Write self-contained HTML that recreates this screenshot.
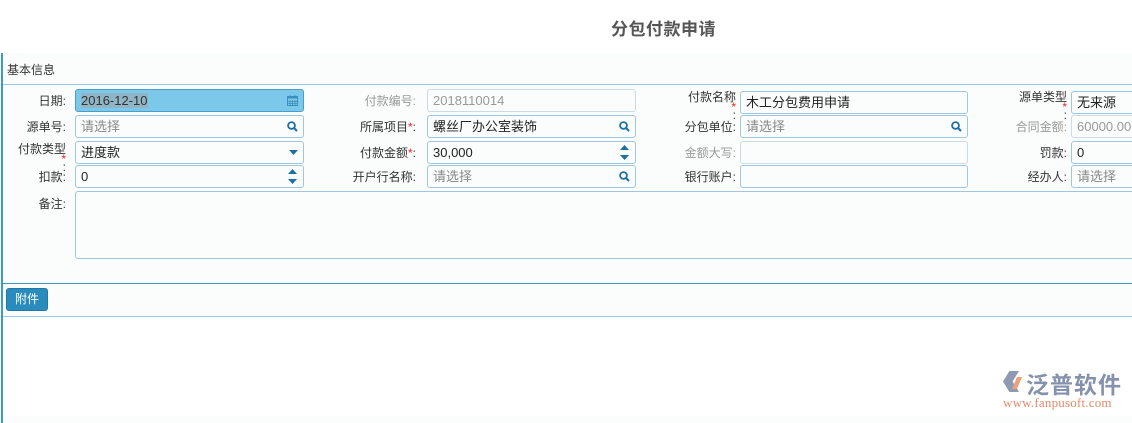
<!DOCTYPE html>
<html><head><meta charset="utf-8"><style>
*{margin:0;padding:0;box-sizing:border-box}
body{width:1132px;height:416px;overflow:hidden;background:#fff;font-family:"Liberation Sans","Noto Sans CJK SC",sans-serif;position:relative}
.t{position:absolute;left:611px;top:15px;font-size:17px;font-weight:bold;color:#555;letter-spacing:0.5px}
.panel{position:absolute;left:1px;top:53px;width:1140px;height:370px;background:#fbfcfc;border-left:2px solid #3a9bc8}
.a{position:absolute}
.lbl{position:absolute;font-size:12px;color:#333;text-align:right;white-space:nowrap}
.lbl.g{color:#999}
.in{position:absolute;height:23px;border:1px solid #9fc6de;border-radius:3px;background:#fbfcfc;font-size:13px;color:#222;padding-left:5px;line-height:21px;white-space:nowrap;overflow:hidden}
.in.d{border-color:#cfdbe2;color:#999}
.ph{color:#888}
.ic{position:absolute;right:4px;top:4px}
.req{color:#e22}
.two{line-height:12px}
.two .s{display:inline-block;line-height:8px;vertical-align:top}
</style></head><body>
<div class="t">分包付款申请</div>
<div class="panel"></div>
<div class="a" style="left:7px;top:61px;font-size:12px;color:#333">基本信息</div>
<div class="a" style="left:3px;top:84px;width:1129px;height:1px;background:#9cc7e0"></div>

<!-- row1 -->
<div class="lbl" style="left:20px;top:92px;width:46px">日期:</div>
<div class="in" style="left:75px;top:89px;width:229px;background:#7cc8eb;border-color:#4a9fc9"><span style="background:#8fb5c6;color:#333">2016-12-10</span>
<svg class="ic" style="top:5px;right:5px" width="11" height="11" viewBox="0 0 11 11"><rect x="0.5" y="1.5" width="10" height="9" fill="none" stroke="#3a8fbd"/><rect x="0.5" y="1.5" width="10" height="2" fill="#3a8fbd"/><path d="M3 0v3M8 0v3M3 5v5M5.5 5v5M8 5v5M1 6.5h9M1 8.5h9" stroke="#3a8fbd" stroke-width="0.8"/></svg></div>
<div class="lbl g" style="left:330px;top:92px;width:86px">付款编号:</div>
<div class="in d" style="left:427px;top:89px;width:209px">2018110014</div>
<div class="lbl two" style="left:660px;top:91px;width:76px">付款名称<br><span class="s"><span class="req">*</span><br>:</span></div>
<div class="in" style="left:740px;top:91px;width:228px">木工分包费用申请</div>
<div class="lbl two" style="left:990px;top:91px;width:77px">源单类型<br><span class="s"><span class="req">*</span><br>:</span></div>
<div class="in" style="left:1071px;top:91px;width:80px">无来源</div>

<!-- row2 -->
<div class="lbl" style="left:10px;top:118px;width:56px">源单号:</div>
<div class="in" style="left:75px;top:115px;width:229px"><span class="ph">请选择</span>
<svg class="ic" style="top:5px;right:5px" width="11" height="11" viewBox="0 0 11 11"><circle cx="4.5" cy="4.5" r="3.4" fill="none" stroke="#1d6fa5" stroke-width="1.8"/><path d="M7 7l3 3" stroke="#1d6fa5" stroke-width="2"/></svg></div>
<div class="lbl" style="left:330px;top:118px;width:86px">所属项目<span class="req">*</span>:</div>
<div class="in" style="left:427px;top:115px;width:209px">螺丝厂办公室装饰
<svg class="ic" style="top:5px;right:5px" width="11" height="11" viewBox="0 0 11 11"><circle cx="4.5" cy="4.5" r="3.4" fill="none" stroke="#1d6fa5" stroke-width="1.8"/><path d="M7 7l3 3" stroke="#1d6fa5" stroke-width="2"/></svg></div>
<div class="lbl" style="left:660px;top:118px;width:76px">分包单位:</div>
<div class="in" style="left:740px;top:115px;width:228px"><span class="ph">请选择</span>
<svg class="ic" style="top:5px;right:5px" width="11" height="11" viewBox="0 0 11 11"><circle cx="4.5" cy="4.5" r="3.4" fill="none" stroke="#1d6fa5" stroke-width="1.8"/><path d="M7 7l3 3" stroke="#1d6fa5" stroke-width="2"/></svg></div>
<div class="lbl g" style="left:990px;top:118px;width:77px">合同金额:</div>
<div class="in d" style="left:1071px;top:115px;width:80px">60000.00</div>

<!-- row3 -->
<div class="lbl two" style="left:10px;top:143px;width:56px">付款类型<br><span class="s"><span class="req">*</span><br>:</span></div>
<div class="in" style="left:75px;top:141px;width:229px">进度款
<svg class="ic" style="top:8px;right:5px" width="9" height="6" viewBox="0 0 9 6"><path d="M0 0h9L4.5 5z" fill="#1d6fa5"/></svg></div>
<div class="lbl" style="left:330px;top:144px;width:86px">付款金额<span class="req">*</span>:</div>
<div class="in" style="left:427px;top:141px;width:209px">30,000
<svg class="ic" style="top:3px;right:6px" width="9" height="15" viewBox="0 0 9 15"><path d="M0 5L4.5 0 9 5zM0 10l4.5 5L9 10z" fill="#1d6fa5"/></svg></div>
<div class="lbl g" style="left:660px;top:144px;width:76px">金额大写:</div>
<div class="in d" style="left:740px;top:141px;width:228px"></div>
<div class="lbl" style="left:990px;top:144px;width:77px">罚款:</div>
<div class="in" style="left:1071px;top:141px;width:80px">0</div>

<!-- row4 -->
<div class="lbl" style="left:10px;top:168px;width:56px">扣款:</div>
<div class="in" style="left:75px;top:165px;width:229px">0
<svg class="ic" style="top:3px;right:6px" width="9" height="15" viewBox="0 0 9 15"><path d="M0 5L4.5 0 9 5zM0 10l4.5 5L9 10z" fill="#1d6fa5"/></svg></div>
<div class="lbl" style="left:330px;top:168px;width:86px">开户行名称:</div>
<div class="in" style="left:427px;top:165px;width:209px"><span class="ph">请选择</span>
<svg class="ic" style="top:5px;right:5px" width="11" height="11" viewBox="0 0 11 11"><circle cx="4.5" cy="4.5" r="3.4" fill="none" stroke="#1d6fa5" stroke-width="1.8"/><path d="M7 7l3 3" stroke="#1d6fa5" stroke-width="2"/></svg></div>
<div class="lbl" style="left:660px;top:168px;width:76px">银行账户:</div>
<div class="in" style="left:740px;top:165px;width:228px"></div>
<div class="lbl" style="left:990px;top:168px;width:77px">经办人:</div>
<div class="in" style="left:1071px;top:165px;width:80px"><span class="ph">请选择</span></div>

<!-- remark -->
<div class="lbl" style="left:10px;top:195px;width:56px">备注:</div>
<div class="in" style="left:75px;top:191px;width:1080px;height:68px"></div>

<div class="a" style="left:3px;top:283px;width:1129px;height:1px;background:#3a9bc8"></div>
<div class="a" style="left:6px;top:288px;width:42px;height:23px;background:#2a8bbd;border:1px solid #1f78a8;border-radius:3px;color:#fff;font-size:12px;text-align:center;line-height:21px">附件</div>
<div class="a" style="left:3px;top:316px;width:1129px;height:1px;background:#9cc7e0"></div>
<div class="a" style="left:3px;top:317px;width:1129px;height:99px;background:#fff"></div>

<!-- logo -->
<div class="a" style="left:1003px;top:371px;width:16px;height:21px;background:#8e9ab3;clip-path:polygon(40% 0,100% 0,60% 50%,100% 100%,40% 100%,0 50%)"></div>
<div class="a" style="left:1012px;top:377px;width:10px;height:12px;background:#e9a27c;clip-path:polygon(50% 0,100% 0,50% 100%,0 100%)"></div>
<div class="a" style="left:1026px;top:366px;font-size:23px;color:#8592ad;letter-spacing:1px;font-weight:bold">泛普软件</div>
<div class="a" style="left:1003px;top:395px;font-size:13px;color:#e48a6a;font-family:'Liberation Serif',serif;letter-spacing:0.2px">www.fanpusoft.com</div>
</body></html>
